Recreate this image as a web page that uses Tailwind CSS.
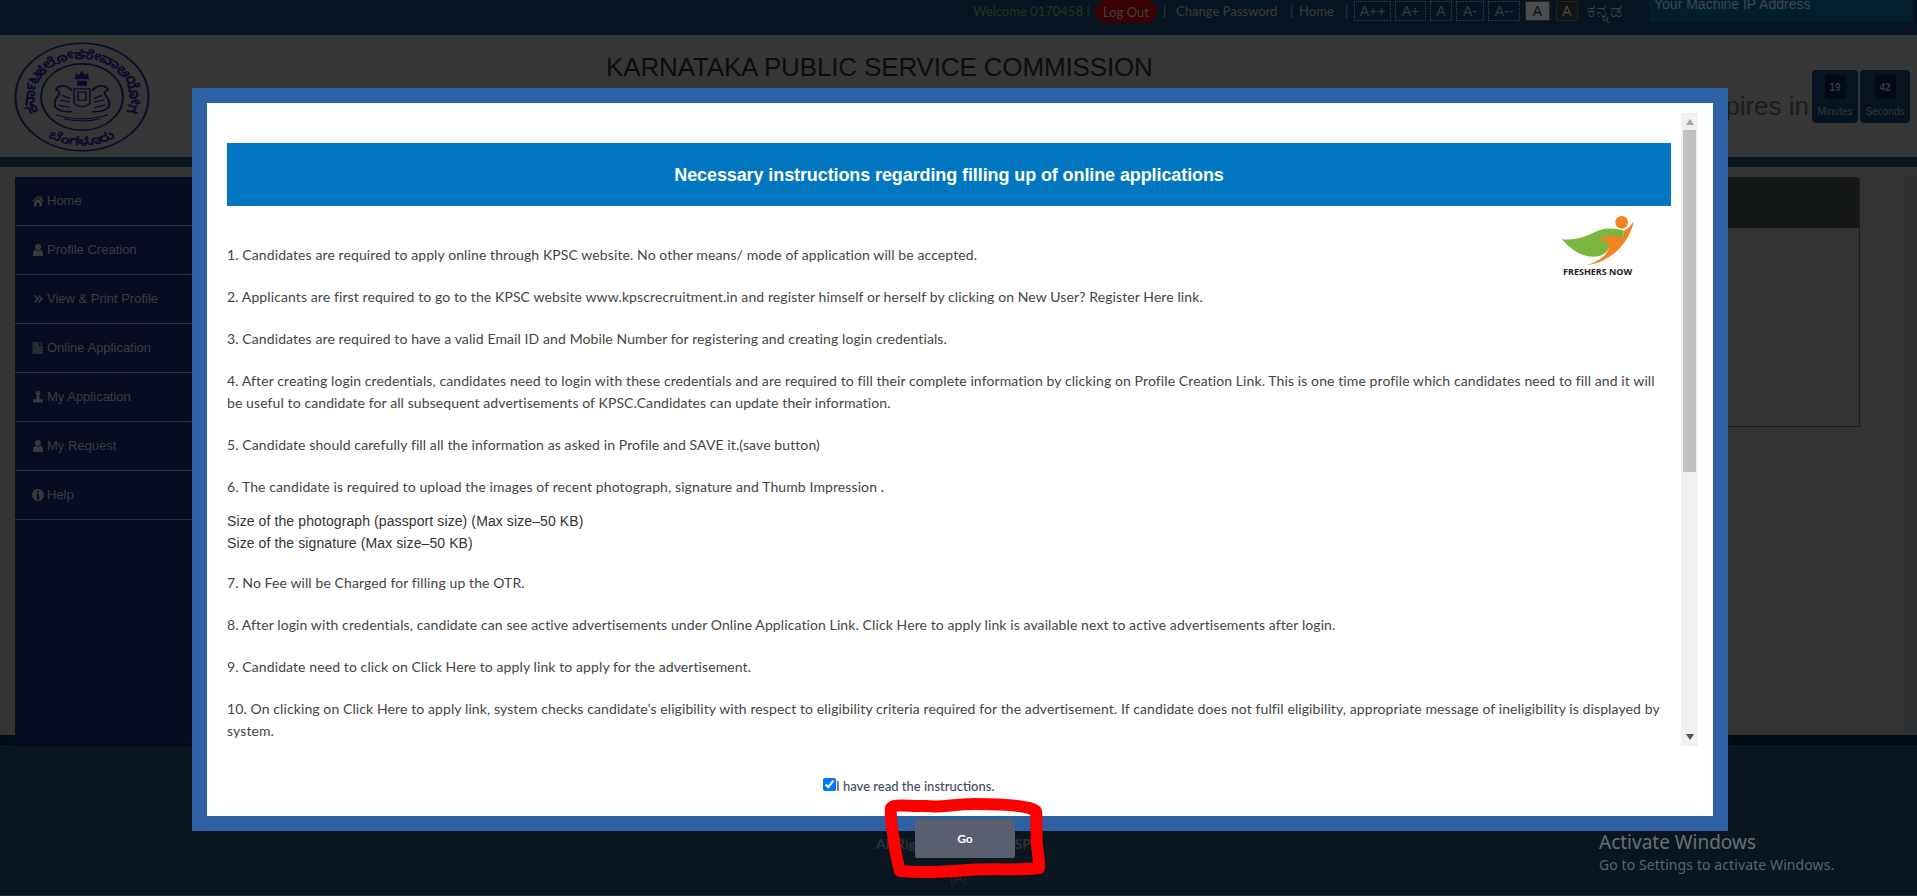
<!DOCTYPE html>
<html lang="en">
  <head>
    <meta charset="UTF-8" />
    <meta name="viewport" content="width=device-width, initial-scale=1.0" />
    <title>KPSC Online Application</title>
    <script src="https://cdn.jsdelivr.net/npm/@tailwindcss/browser@4"></script>
  </head>
  <body class="bg-[#0a1620]">
    <div class="relative flex h-[896px] w-full flex-col overflow-hidden font-['Lato',sans-serif] text-[14px]">
      <!-- top bar -->
      <div class="flex h-[35px] shrink-0 items-start bg-[#071522] pl-[973px] text-[13px] leading-[20px] whitespace-nowrap text-[#3a3a3a]">
        <span class="mt-[1px] w-[122px] font-medium text-[#25331f]">Welcome 0170458 !</span>
        <span class="flex h-[23px] w-[62px] items-center justify-center rounded-[12px] bg-[#3a0202] text-[#3f3f3f]">Log Out</span>
        <span class="mt-[1px] ml-[6px] w-[13px]">|</span>
        <span class="mt-[1px] w-[114px] font-medium">Change Password</span>
        <span class="mt-[1px] w-[9px]">|</span>
        <span class="mt-[1px] w-[46px] font-medium">Home</span>
        <span class="mt-[1px] w-[9px]">|</span>
        <div class="mt-px flex gap-[4px] font-['Liberation_Sans',sans-serif] text-[14px] text-[#3a3a3a]">
          <span class="flex h-[20px] w-[37px] items-center justify-center border border-dotted border-[#3a3f44]">A++</span>
          <span class="flex h-[20px] w-[31px] items-center justify-center border border-dotted border-[#3a3f44]">A+</span>
          <span class="flex h-[20px] w-[22px] items-center justify-center border border-dotted border-[#3a3f44]">A</span>
          <span class="flex h-[20px] w-[28px] items-center justify-center border border-dotted border-[#3a3f44]">A-</span>
          <span class="flex h-[20px] w-[32px] items-center justify-center border border-dotted border-[#3a3f44]">A--</span>
          <span class="ml-[1px] flex h-[20px] w-[25px] items-center justify-center border border-[#222] bg-[#4d4d4d] text-[#0c0c0c]">A</span>
          <span class="ml-[2px] flex h-[20px] w-[22px] items-center justify-center border border-[#222] bg-[#141414] text-[#4a4a4a]">A</span>
        </div>
        <span class="ml-[9px] w-[62px] text-[19px] leading-[20px] text-[#3f3f3f]">ಕನ್ನಡ</span>
        <div class="h-[22px] w-[264px] overflow-hidden bg-[#02202c] pl-[5px] font-['Liberation_Sans',sans-serif] text-[14px] leading-[9px] text-[#3c4a4f]">Your Machine IP Address</div>
      </div>

      <!-- header band -->
      <div class="relative flex h-[122px] shrink-0 bg-[#363636]">
        <svg class="mt-[7px] ml-[14px] h-[110px] w-[136px]" viewBox="0 0 136 136" preserveAspectRatio="none" fill="none" stroke="#0a0c2c">
          <defs>
            <path id="ring" d="M24.700 86.400A47 47 0 1 1 111.300 86.400" />
            <path id="ringb" d="M33.600 117A60 60 0 0 0 102.400 117" />
          </defs>
          <circle cx="68" cy="68" r="66.500" stroke-width="2" />
          <circle cx="68" cy="68" r="41" stroke-width="2" />
          <text fill="#0a0c2c" stroke="none" font-size="16" font-weight="700" font-family="Noto Sans Kannada, Noto Sans, sans-serif"><textPath href="#ring" textLength="185" lengthAdjust="spacing">ಕರ್ನಾಟಕ ಲೋಕಸೇವಾ ಆಯೋಗ</textPath></text>
          <text fill="#0a0c2c" stroke="none" font-size="15" font-weight="700" font-family="Noto Sans Kannada, Noto Sans, sans-serif"><textPath href="#ringb" textLength="72" lengthAdjust="spacing">ಬೆಂಗಳೂರು</textPath></text>
          <path d="M61 46h14l-1-8-3 3-3-6-3 6-3-3zM63 48h10v6H63z" fill="#0a0c2c" stroke="none" />
          <path d="M60 58h16v18q-8 8-16 0z" stroke-width="1.500" />
          <path d="M64 62h8v10h-8z" stroke-width="1.500" />
          <path d="M58 60c-6-8-14-7-16-1 3 1 4 3 3 6-3 4-5 9-4 15 3 5 9 7 17 6M78 60c6-8 14-7 16-1-3 1-4 3-3 6 3 4 5 9 4 15-3 5-9 7-17 6" stroke-width="2" />
          <path d="M48 66l8 4M46 72l10 2M45 78l11 3M88 66l-8 4M90 72l-10 2M91 78l-11 3M42 90q26 10 52 0M50 95q18 5 36 0" stroke-width="1.500" />
        </svg>
        <div class="absolute top-[18px] left-[606px] font-['Liberation_Sans',sans-serif] text-[26px] leading-[28px] tracking-[-0.15px] text-[#0d0d0d]">KARNATAKA PUBLIC SERVICE COMMISSION</div>
        <div class="absolute top-[54px] right-[108px] font-['Liberation_Sans',sans-serif] text-[26px] leading-[34px] text-[#1c1c1c]">Your session expires in</div>
        <div class="absolute top-[35px] left-[1812px] flex gap-[2px] font-['Liberation_Sans',sans-serif] text-[#3a3a3a]">
          <div class="flex h-[53px] w-[46px] flex-col items-center rounded-[4px] bg-[#07131f] pt-[5px]">
            <span class="flex h-[24px] w-[21px] items-center justify-center rounded-[3px] bg-[#010818] text-[10px] font-bold">19</span>
            <span class="mt-[5px] text-[10px]">Minutes</span>
          </div>
          <div class="flex h-[53px] w-[50px] flex-col items-center rounded-[4px] bg-[#07131f] pt-[5px]">
            <span class="flex h-[24px] w-[21px] items-center justify-center rounded-[3px] bg-[#010818] text-[10px] font-bold">42</span>
            <span class="mt-[5px] text-[10px]">Seconds</span>
          </div>
        </div>
      </div>
      <div class="h-[10px] shrink-0 bg-[#0a1622]"></div>

      <!-- main -->
      <div class="flex h-[568px] shrink-0 bg-[#333333] pt-[10px] pl-[15px] font-['Liberation_Sans',sans-serif]">
        <nav class="relative h-[570px] w-[200px] shrink-0 bg-[#070c22] text-[13px] text-[#3e3e3e]">
          <a class="flex h-[49px] items-center gap-[3px] border-b border-[#2b2c30] pl-[17px]">
            <svg class="h-[12px] w-[12px]" viewBox="0 0 12 12" fill="#3a3a3a"><path d="M6 .8 0 6.200l.8.8L6 2.400 11.200 7l.8-.8-2-1.800V1.200H8.600v2zM2 7l4-3.400L10 7v4.400H7.400V8H4.600v3.400H2z" /></svg>
            Home
          </a>
          <a class="flex h-[49px] items-center gap-[3px] border-b border-[#2b2c30] pl-[17px]">
            <svg class="h-[12px] w-[12px]" viewBox="0 0 12 12" fill="#3a3a3a"><circle cx="6" cy="3" r="3" /><path d="M1 12V9.400C1 7.400 2.400 6 3.600 6q2.400 1.600 4.800 0C9.600 6 11 7.400 11 9.400V12z" /></svg>
            Profile Creation
          </a>
          <a class="flex h-[49px] items-center gap-[3px] border-b border-[#2b2c30] pl-[17px]">
            <svg class="h-[12px] w-[12px]" viewBox="0 0 12 12" fill="none" stroke="#3a3a3a" stroke-width="1.600"><path d="M2.500 2.500 6 6 2.500 9.500M6.500 2.500 10 6 6.500 9.500" /></svg>
            View &amp; Print Profile
          </a>
          <a class="flex h-[49px] items-center gap-[3px] border-b border-[#2b2c30] pl-[17px]">
            <svg class="h-[12px] w-[12px]" viewBox="0 0 12 12" fill="#272c33"><path d="M.5 0h6.500v4H11v8H.5zM8 0l3 3H8z" /></svg>
            Online Application
          </a>
          <a class="flex h-[49px] items-center gap-[3px] border-b border-[#2b2c30] pl-[17px]">
            <svg class="h-[12px] w-[12px]" viewBox="0 0 12 12" fill="#3a3a3a"><circle cx="6" cy="2.400" r="2.400" /><path d="M4.800 4.500h2.400L8 8.200h3V11H1V8.200h3zM1 11.400h10V12H1z" /></svg>
            My Application
          </a>
          <a class="flex h-[49px] items-center gap-[3px] border-b border-[#2b2c30] pl-[17px]">
            <svg class="h-[12px] w-[12px]" viewBox="0 0 12 12" fill="#3a3a3a"><circle cx="6" cy="3" r="3" /><path d="M1 12V9.400C1 7.400 2.400 6 3.600 6q2.400 1.600 4.800 0C9.600 6 11 7.400 11 9.400V12z" /></svg>
            My Request
          </a>
          <a class="flex h-[49px] items-center gap-[3px] border-b border-[#2b2c30] pl-[17px]">
            <svg class="h-[12px] w-[12px]" viewBox="0 0 12 12" fill="#3a3a3a"><path fill-rule="evenodd" d="M6 0a6 6 0 1 1 0 12A6 6 0 0 1 6 0M5 1.800v2h2v-2zM4.400 5v1.200H5v3h-.6v1.200h3.200V9.200H7V5z" /></svg>
            Help
          </a>
        </nav>
        <section class="mr-[45px] ml-auto h-[250px] w-[600px] border-r border-b border-[#1c1c1c]">
          <div class="h-[51px] rounded-tr-[3px] bg-[#141817]"></div>
        </section>
        <div class="h-full w-[12px] bg-[#2e2f31]"></div>
      </div>
      <div class="h-[10px] shrink-0 bg-[#020c16]"></div>

      <!-- footer -->
      <footer class="flex flex-1 flex-col items-center border-b border-[#22282d] bg-[#0a1620] pt-[88px] font-bold text-[#2e3338]">
        <p class="mr-[10px]">All Rights Reserved @ SP</p>
        <p class="mt-[13px] font-normal text-[#20262b]">[A]</p>
      </footer>

      <!-- modal -->
      <div class="absolute top-[88px] left-[192px] flex h-[743px] w-[1536px] flex-col border-[15px] border-[#2e61a3] bg-white tracking-[0.1px] text-[#444444]">
        <div class="mt-[10px] flex h-[633px] pl-[20px]">
          <div class="relative h-full w-[1444px] overflow-hidden pt-[30px] leading-[22px]">
            <h2 class="flex h-[63px] items-center justify-center bg-[#0077c0] font-['Liberation_Sans',sans-serif] text-[18px] font-bold tracking-[-0.1px] text-white">Necessary instructions regarding filling up of online applications</h2>
            <div class="absolute top-[102px] left-[1333px]">
              <svg class="h-[52px] w-[75px]" viewBox="180 165 225 156">
                <circle cx="365" cy="187" r="19" fill="#f58220" />
                <path d="M185 237C225 245 265 225 300 210 325 203 350 205 372 212L368 238 330 250C328 275 310 290 280 290 240 290 210 265 185 237Z" fill="#7ab740" />
                <path d="M402 183C395 195 385 205 372 212L368 237C350 225 325 222 290 243 305 238 325 245 328 258 325 285 295 305 258 316 320 310 385 260 402 183Z" fill="#f58220" />
              </svg>
              <p class="mt-[-1px] ml-[3px] font-['Open_Sans',sans-serif] text-[9px] leading-[12px] font-bold tracking-normal whitespace-nowrap text-[#222222]">FRESHERS NOW</p>
            </div>
            <p class="mt-[38px] mb-[20px]">1. Candidates are required to apply online through KPSC website. No other means/ mode of application will be accepted.</p>
            <p class="mb-[20px]">2. Applicants are first required to go to the KPSC website www.kpscrecruitment.in and register himself or herself by clicking on New User? Register Here link.</p>
            <p class="mb-[20px]">3. Candidates are required to have a valid Email ID and Mobile Number for registering and creating login credentials.</p>
            <p class="mb-[20px]">4. After creating login credentials, candidates need to login with these credentials and are required to fill their complete information by clicking on Profile Creation Link. This is one time profile which candidates need to fill and it will be useful to candidate for all subsequent advertisements of KPSC.Candidates can update their information.</p>
            <p class="mb-[20px]">5. Candidate should carefully fill all the information as asked in Profile and SAVE it.(save button)</p>
            <p class="mb-[12px]">6. The candidate is required to upload the images of recent photograph, signature and Thumb Impression .</p>
            <p class="font-['Liberation_Sans',sans-serif] text-[#333333]">Size of the photograph (passport size) (Max size–50 KB)</p>
            <p class="mb-[18px] font-['Liberation_Sans',sans-serif] text-[#333333]">Size of the signature (Max size–50 KB)</p>
            <p class="mb-[20px]">7. No Fee will be Charged for filling up the OTR.</p>
            <p class="mb-[20px]">8. After login with credentials, candidate can see active advertisements under Online Application Link. Click Here to apply link is available next to active advertisements after login.</p>
            <p class="mb-[20px]">9. Candidate need to click on Click Here to apply link to apply for the advertisement.</p>
            <p>10. On clicking on Click Here to apply link, system checks candidate’s eligibility with respect to eligibility criteria required for the advertisement. If candidate does not fulfil eligibility, appropriate message of ineligibility is displayed by system.</p>
          </div>
          <!-- scrollbar -->
          <div class="ml-[10px] flex h-full w-[17px] flex-col items-center bg-[#f1f1f1]">
            <svg class="mt-[6px] h-[6px] w-[8px]" viewBox="0 0 8 6" fill="#a3a3a3"><path d="M4 0l4 6H0z" /></svg>
            <div class="mt-[5px] h-[342px] w-[13px] bg-[#c1c1c1]"></div>
            <svg class="mt-auto mb-[6px] h-[6px] w-[8px]" viewBox="0 0 8 6" fill="#505050"><path d="M0 0h8L4 6z" /></svg>
          </div>
        </div>
        <label class="mt-[30px] ml-[616px] flex items-center text-[13px] leading-[20px] font-medium tracking-normal text-[#444c5c]">
          <input type="checkbox" checked class="mb-[3px] h-[13px] w-[13px] accent-[#0075ff]" />
          <span>I have read the instructions.</span>
        </label>
      </div>

      <!-- go button and red marker scribble on top of the screenshot -->
      <button class="absolute top-[819px] left-[915px] h-[39px] w-[100px] rounded-[2px] bg-[#5a5f70] text-[12px] font-bold text-white">Go</button>
      <svg class="pointer-events-none absolute top-0 left-0 h-[896px] w-[1917px]" viewBox="0 0 1917 896" fill="none">
        <path d="M891 808C893 804 905 806 925 806 945 808 950 804 975 804 1000 804 1028 805 1036 811 1037 825 1036 835 1037 845 1038 856 1040 862 1039 868 1015 871 990 868 967 870 945 872 920 873 900 871 897 860 895 850 894 840 892 830 890 820 891 808Z" stroke="#fe0000" stroke-width="12" stroke-linejoin="round" stroke-linecap="round" />
      </svg>

      <!-- windows watermark -->
      <div class="absolute top-[829px] left-[1599px] font-['Noto_Sans',sans-serif] text-[#6b7075]">
        <p class="text-[19px] leading-[26px]">Activate Windows</p>
        <p class="text-[14px] leading-[20px] tracking-[0.1px] text-[#5f6469]">Go to Settings to activate Windows.</p>
      </div>
    </div>
  </body>
</html>
